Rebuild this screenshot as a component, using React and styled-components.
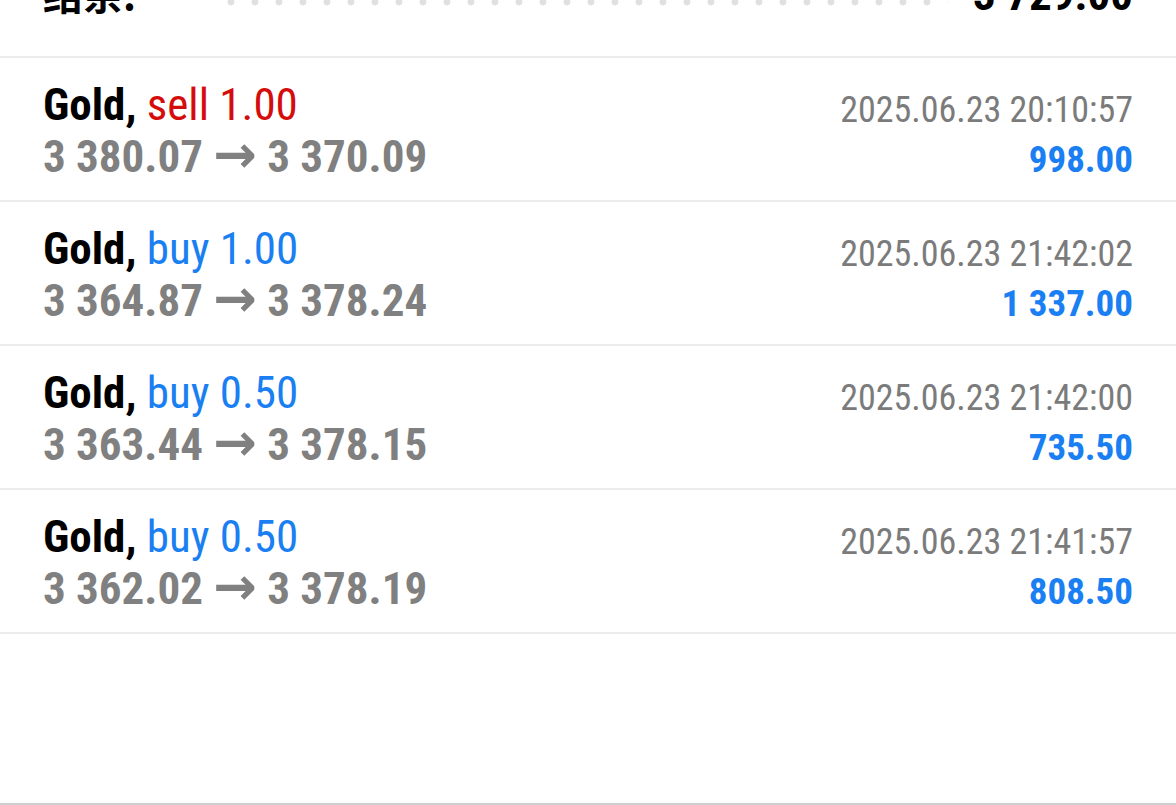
import React from "react";
import styled, { createGlobalStyle } from "styled-components";

const Global = createGlobalStyle`
  html, body { margin: 0; padding: 0; background: #ffffff; }
  body { font-family: "Roboto", "Noto Sans CJK SC", sans-serif; overflow: hidden; }
  #root { width: 1176px; height: 805px; }
`;

const Screen = styled.div`
  width: 1176px;
  height: 805px;
  box-sizing: border-box;
  border-bottom: 2px solid #cfcfcf;
  overflow: hidden;
  background: #fff;
`;

const Scroller = styled.div`
  margin-top: -46px;
  font-stretch: 75%;
`;

const Summary = styled.div`
  display: flex;
  align-items: baseline;
  padding: 13px 43px 0;
  height: 104px;
  box-sizing: border-box;
  border-bottom: 2px solid #ececec;
  font-size: 45px;
  line-height: 52px;
  font-weight: 700;
  color: #000;
`;

const SummaryLabel = styled.span`
  font-family: "Noto Sans CJK SC", sans-serif;
  font-weight: 700;
  font-size: 40px;
  font-stretch: normal;
`;

const Leader = styled.span`
  flex: 1;
  align-self: flex-start;
  margin: 31px 25px 0 83px;
  height: 8px;
  background-image: radial-gradient(circle, #e0e0e0 3.2px, transparent 3.8px);
  background-size: 24px 8px;
  background-repeat: repeat-x;
`;

const SummaryValue = styled.span`
  font-family: "Roboto", sans-serif;
`;

const Row = styled.div`
  display: flex;
  justify-content: space-between;
  padding: 21px 43px 0;
  height: 144px;
  box-sizing: border-box;
  border-bottom: 2px solid #ececec;
`;

const Left = styled.div`
  display: flex;
  flex-direction: column;
`;

const Title = styled.div`
  font-size: 45px;
  line-height: 52px;
  color: #000;
`;

const Symbol = styled.span`
  font-weight: 700;
`;

const Side = styled.span`
  color: ${(p) => (p.$type === "sell" ? "#d40c0c" : "#1a7ff2")};
`;

const Prices = styled.div`
  margin-top: 1px;
  font-size: 45px;
  line-height: 50px;
  font-weight: 700;
  color: #808080;
`;

const Arrow = styled.span`
  font-family: "DejaVu Sans", sans-serif;
  font-weight: 700;
  font-stretch: normal;
  font-size: 52px;
  line-height: 40px;
`;

const Right = styled.div`
  display: flex;
  flex-direction: column;
  align-items: flex-end;
  padding-top: 10px;
`;

const Time = styled.div`
  font-size: 36px;
  line-height: 42px;
  color: #7b7b7b;
`;

const Profit = styled.div`
  margin-top: 8px;
  font-size: 37px;
  line-height: 42px;
  font-weight: 700;
  color: #1a7ff2;
`;

const deals = [
  { type: "sell", vol: "1.00", open: "3 380.07", close: "3 370.09", time: "2025.06.23 20:10:57", profit: "998.00" },
  { type: "buy", vol: "1.00", open: "3 364.87", close: "3 378.24", time: "2025.06.23 21:42:02", profit: "1 337.00" },
  { type: "buy", vol: "0.50", open: "3 363.44", close: "3 378.15", time: "2025.06.23 21:42:00", profit: "735.50" },
  { type: "buy", vol: "0.50", open: "3 362.02", close: "3 378.19", time: "2025.06.23 21:41:57", profit: "808.50" },
];

export default function App() {
  return (
    <>
      <Global />
      <Screen>
        <Scroller>
          <Summary>
            <SummaryLabel>结余:</SummaryLabel>
            <Leader />
            <SummaryValue>3 729.00</SummaryValue>
          </Summary>
          {deals.map((d, i) => (
            <Row key={i}>
              <Left>
                <Title>
                  <Symbol>Gold,</Symbol> <Side $type={d.type}>{d.type} {d.vol}</Side>
                </Title>
                <Prices>
                  {d.open} <Arrow>→</Arrow> {d.close}
                </Prices>
              </Left>
              <Right>
                <Time>{d.time}</Time>
                <Profit>{d.profit}</Profit>
              </Right>
            </Row>
          ))}
        </Scroller>
      </Screen>
    </>
  );
}
